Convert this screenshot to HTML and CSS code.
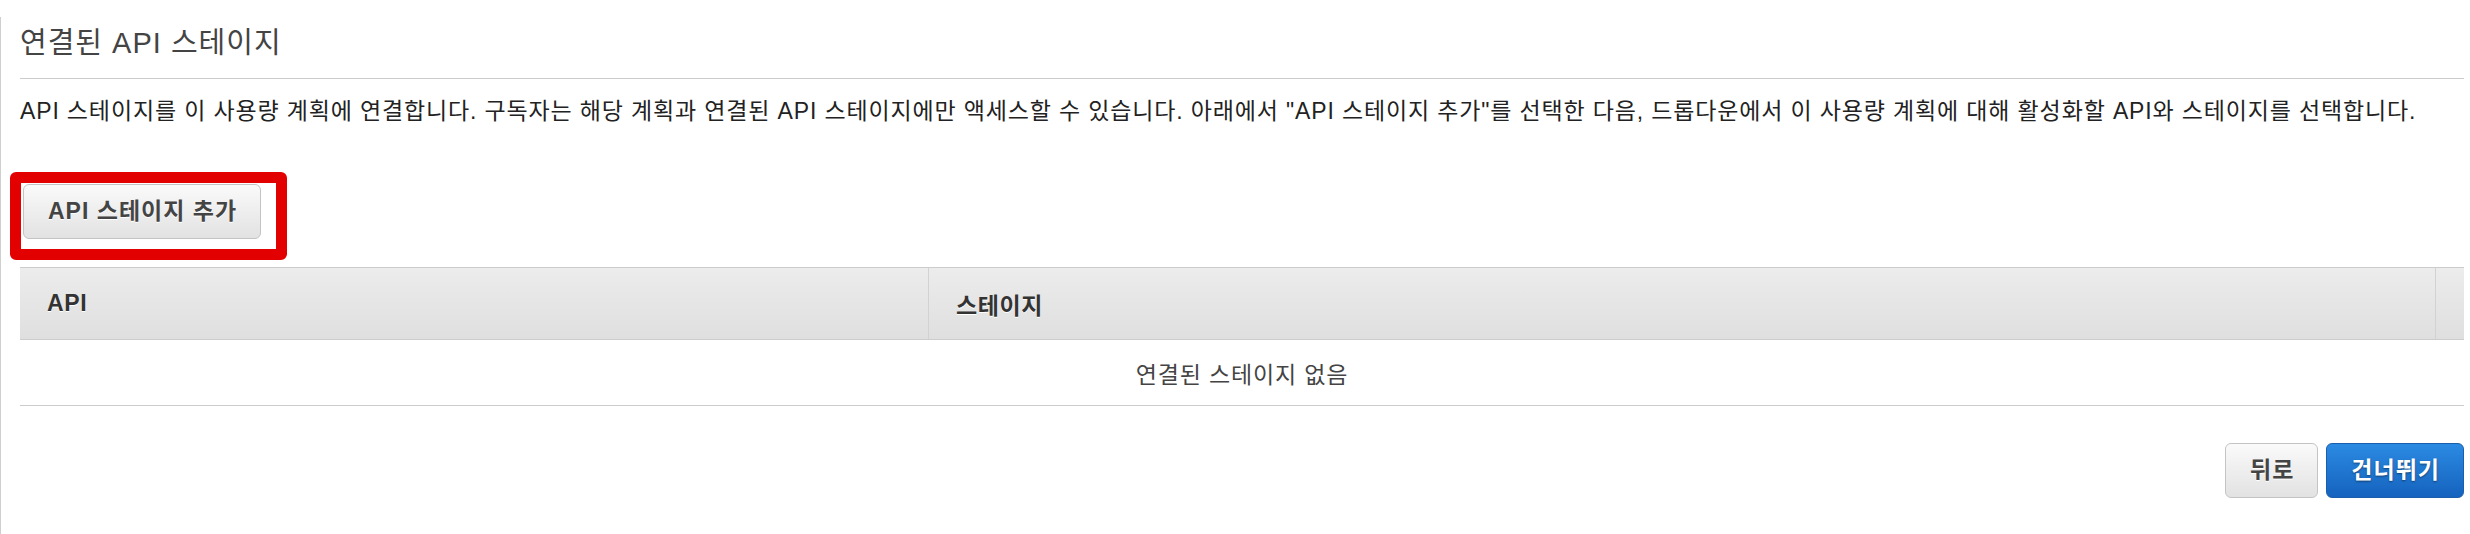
FILE: index.html
```html
<!DOCTYPE html>
<html lang="ko">
<head>
<meta charset="utf-8">
<title>연결된 API 스테이지</title>
<link rel="stylesheet" href="styles.css">
</head>
<body>
<div class="panel">
  <h2 class="title">연결된 API 스테이지</h2>
  <p class="desc">API 스테이지를 이 사용량 계획에 연결합니다. 구독자는 해당 계획과 연결된 API 스테이지에만 액세스할 수 있습니다. 아래에서 "API 스테이지 추가"를 선택한 다음, 드롭다운에서 이 사용량 계획에 대해 활성화할 API와 스테이지를 선택합니다.</p>
  <div class="toolbar">
    <div class="hl-wrap">
      <button class="btn btn-secondary" type="button">API 스테이지 추가</button>
      <span class="highlight"></span>
    </div>
  </div>
  <div class="stages">
    <div class="stages-head">
      <div class="th">API</div>
      <div class="th th-sep">스테이지</div>
      <div class="th th-sep"></div>
    </div>
    <div class="stages-empty">연결된 스테이지 없음</div>
  </div>
  <div class="footer">
    <button class="btn btn-secondary" type="button">뒤로</button>
    <button class="btn btn-primary" type="button">건너뛰기</button>
  </div>
</div>
</body>
</html>
```
FILE: styles.css
```css
html, body {
  margin: 0;
  background: #fff;
}
body {
  font-family: "Liberation Sans", "Noto Sans CJK KR", sans-serif;
  color: #222;
}
.panel {
  margin-top: 17px;
  border-left: 1px solid #cfcfcf;
  padding: 0 6px 0 19px;
  min-height: 517px;
  box-sizing: border-box;
}
.title {
  margin: 0;
  padding: 8px 0 17px;
  font-size: 29px;
  line-height: 36px;
  letter-spacing: 1px;
  font-weight: normal;
  color: #444;
  border-bottom: 1px solid #cccccc;
}
.desc {
  margin: 16px 0 0;
  font-size: 23px;
  line-height: 32px;
  letter-spacing: 0.85px;
  color: #222;
}
.toolbar {
  display: flex;
  margin-top: 57px;
  padding-left: 3px;
}
.hl-wrap {
  position: relative;
  display: flex;
}
.highlight {
  position: absolute;
  left: -13px;
  top: -12px;
  right: -26px;
  bottom: -21px;
  border: 11px solid #e30000;
  border-radius: 6px;
  pointer-events: none;
}
.btn {
  height: 55px;
  padding: 0 23px 0 24px;
  border-radius: 6px;
  font-family: "Liberation Sans", "Noto Sans CJK KR", sans-serif;
  font-weight: bold;
  font-size: 23px;
  line-height: 53px;
  letter-spacing: 1px;
  cursor: pointer;
  box-sizing: border-box;
}
.btn-secondary {
  border: 1px solid #c4c4c4;
  background: linear-gradient(#fafafa, #e2e2e2);
  color: #444;
  text-shadow: 0 1px 0 #fff;
}
.btn-primary {
  border: 1px solid #1b5eab;
  background: linear-gradient(#2b8ae2, #1563be);
  color: #fff;
  text-shadow: 0 1px 2px rgba(0, 0, 0, 0.45);
}
.stages {
  margin-top: 28px;
}
.stages-head {
  display: grid;
  grid-template-columns: 908px 1fr 29px;
  height: 71px;
  border-top: 1px solid #cccccc;
  border-bottom: 1px solid #cccccc;
  background: linear-gradient(#ececec, #dfdfdf);
}
.th {
  display: flex;
  align-items: center;
  padding-left: 27px;
  font-size: 23px;
  font-weight: bold;
  letter-spacing: 0.6px;
  color: #333;
  text-shadow: 0 1px 0 #fff;
}
.th-sep {
  border-left: 1px solid #d2d2d2;
  padding-left: 27px;
}
.th-sep:last-child {
  padding-left: 0;
}
.stages-empty {
  display: flex;
  align-items: center;
  justify-content: center;
  height: 65px;
  border-bottom: 1px solid #cccccc;
  font-size: 23px;
  letter-spacing: 0.85px;
  color: #444;
}
.footer {
  display: flex;
  justify-content: flex-end;
  gap: 8px;
  margin-top: 37px;
}
```
